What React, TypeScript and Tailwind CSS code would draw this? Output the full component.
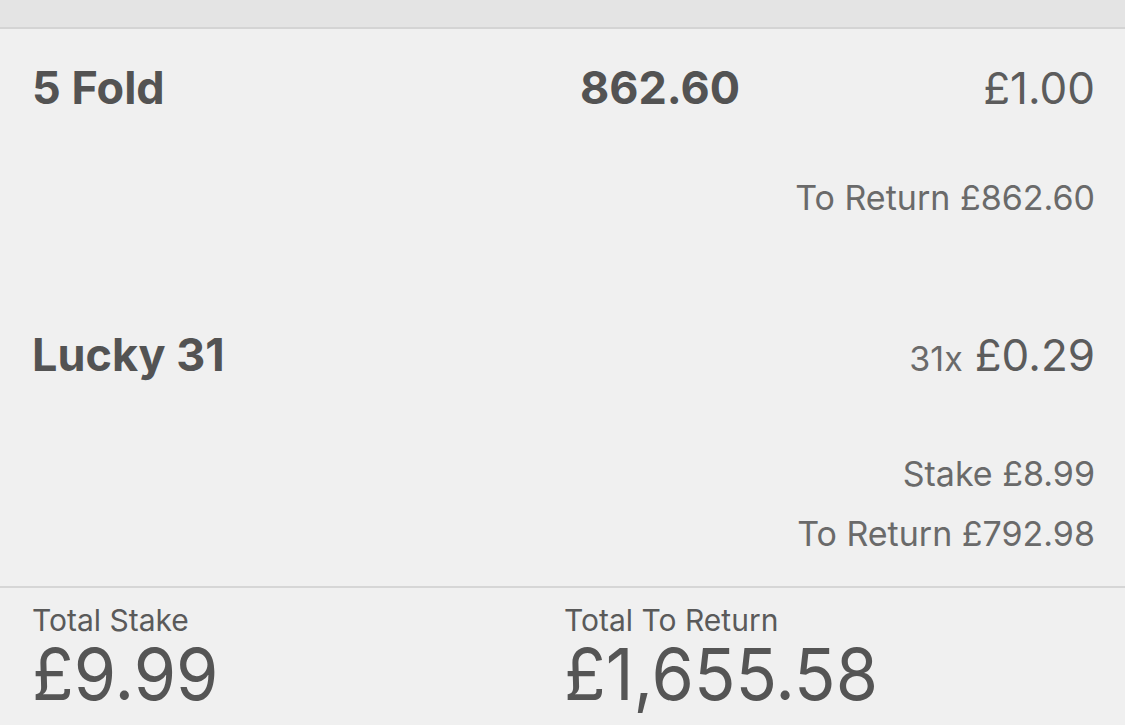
export default function App() {
  return (
    <div
      className="w-[1125px] h-[725px] overflow-hidden bg-[#f0f0f0] text-[#5a5a5a]"
      style={{ fontFamily: 'Inter, "Noto Sans", sans-serif' }}
    >
      <div className="h-[29px] bg-[#e4e4e4] border-b-2 border-[#d4d4d4]" />

      <div className="pl-8 pr-[30px]">
        {/* 5 Fold */}
        <div className="flex items-center h-[116px] pt-[2px]">
          <div className="w-[548px] text-[45px] font-bold text-[#535353]">5 Fold</div>
          <div className="flex-1 text-[45px] font-bold text-[#535353]">862.60</div>
          <div className="text-[44px] text-[#5c5c5c]">£1.00</div>
        </div>
        <div className="mt-[33px] flex justify-end text-[34px] leading-[40px] text-[#6a6a6a]">
          To Return £862.60
        </div>

        {/* Lucky 31 */}
        <div className="mt-[109px] flex items-baseline leading-[56px]">
          <div className="flex-1 text-[45px] font-bold text-[#535353]">Lucky 31</div>
          <span className="text-[34px] text-[#6a6a6a] mr-3">31x</span>
          <span className="text-[44px] text-[#5c5c5c]">£0.29</span>
        </div>
        <div className="flex flex-col items-end text-[34px] leading-[40px] text-[#6a6a6a]">
          <div className="mt-[67px]">Stake £8.99</div>
          <div className="mt-[20px]">To Return £792.98</div>
        </div>
      </div>

      <div className="mt-[32px] border-t-2 border-[#d6d6d6]" />

      {/* Totals */}
      <div className="flex px-8 pt-[15px]">
        <div className="w-[532px] flex flex-col">
          <div className="text-[30px] leading-[34px] text-[#5a5a5a]">Total Stake</div>
          <div className="text-[72px] leading-[74px] text-[#555] origin-left scale-x-[0.95]">£9.99</div>
        </div>
        <div className="flex flex-col">
          <div className="text-[30px] leading-[34px] text-[#5a5a5a]">Total To Return</div>
          <div className="text-[72px] leading-[74px] text-[#555] origin-left scale-x-[0.95]">£1,655.58</div>
        </div>
      </div>
    </div>
  );
}
